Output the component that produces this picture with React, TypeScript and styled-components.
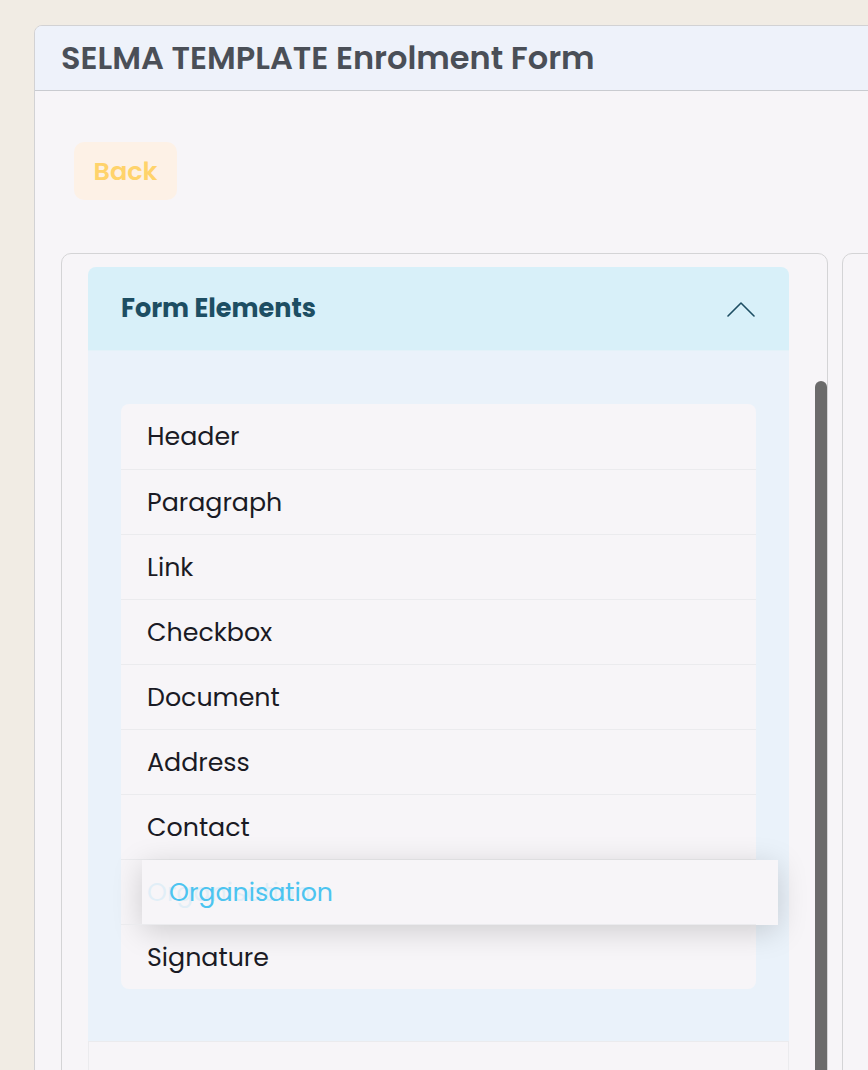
import React from 'react'
import styled, { createGlobalStyle } from 'styled-components'

const GlobalStyle = createGlobalStyle`
  html, body {
    margin: 0;
    padding: 0;
    background: #f1ece4;
    overflow: hidden;
  }
  body {
    font-family: Poppins, Inter, 'Noto Sans', sans-serif;
  }
`

const items = [
  'Header',
  'Paragraph',
  'Link',
  'Checkbox',
  'Document',
  'Address',
  'Contact',
  'Organisation',
  'Signature',
]

const dragging = 'Organisation'

const ChevronUp = () => (
  <svg width="28" height="16" viewBox="0 0 28 16" fill="none">
    <path
      d="M1 15 L14 2 L27 15"
      stroke="#1d4e63"
      strokeWidth="1.6"
      strokeLinecap="round"
      strokeLinejoin="round"
    />
  </svg>
)

const App: React.FC = () => {
  return (
    <Page>
      <GlobalStyle />
      <Card>
        <CardHeader>
          <Title>SELMA TEMPLATE Enrolment Form</Title>
        </CardHeader>
        <CardBody>
          <BackButton>Back</BackButton>
          <Panels>
            <Panel>
              <Accordion>
                <AccordionHeader>
                  <AccordionTitle>Form Elements</AccordionTitle>
                  <ChevronUp />
                </AccordionHeader>
                <AccordionBody>
                  <ElementList>
                    {items.map((item) =>
                      item === dragging ? (
                        <Row key={item}>
                          <DragItem>{item}</DragItem>
                          <Ghost>{item}</Ghost>
                        </Row>
                      ) : (
                        <Row key={item}>{item}</Row>
                      )
                    )}
                  </ElementList>
                </AccordionBody>
                <NextSection />
              </Accordion>
              <Scrollbar />
            </Panel>
            <Panel />
          </Panels>
        </CardBody>
      </Card>
    </Page>
  )
}

export default App

const Page = styled.div`
  height: 1070px;
  padding: 25px 0 0 34px;
  box-sizing: border-box;
  overflow: hidden;
`

const Card = styled.div`
  width: 900px;
  height: 1100px;
  background: #f7f5f8;
  border: 1px solid #d2d2d4;
  border-radius: 8px 0 0 0;
  overflow: hidden;
`

const CardHeader = styled.div`
  height: 64px;
  background: #eef2fa;
  border-bottom: 1px solid #c9cbd0;
  display: flex;
  align-items: center;
  padding-left: 26px;
`

const Title = styled.h1`
  margin: 0;
  font-size: 32px;
  font-weight: 600;
  color: #4a4f57;
`

const CardBody = styled.div`
  padding: 51px 0 0 26px;
`

const BackButton = styled.button`
  display: block;
  margin-left: 13px;
  width: 103px;
  height: 58px;
  border: none;
  border-radius: 10px;
  background: #fdf1e6;
  color: #ffd36b;
  font-family: inherit;
  font-size: 25.5px;
  font-weight: 600;
  padding: 0;
`

const Panels = styled.div`
  display: flex;
  gap: 14px;
  margin-top: 53px;
`

const Panel = styled.div`
  position: relative;
  width: 767px;
  flex-shrink: 0;
  height: 900px;
  box-sizing: border-box;
  border: 1px solid #d4d4d6;
  border-radius: 10px;
  padding: 13px 37px 0 26px;
`

const Scrollbar = styled.div`
  position: absolute;
  right: 0;
  top: 127px;
  width: 12px;
  height: 800px;
  background: #6b6b6b;
  border-radius: 6px 6px 0 0;
`

const Accordion = styled.div`
  width: 701px;
`

const AccordionHeader = styled.div`
  height: 83px;
  background: #d8f0f9;
  border-radius: 8px 8px 0 0;
  border-bottom: 1px solid #e3f2f8;
  display: flex;
  align-items: center;
  justify-content: space-between;
  padding: 0 34px 0 33px;
`

const AccordionTitle = styled.div`
  font-size: 25.5px;
  font-weight: 700;
  color: #1d4e63;
`

const AccordionBody = styled.div`
  background: #eaf2fa;
  padding: 53px 33px 52px;
`

const NextSection = styled.div`
  height: 60px;
  background: #f7f5f8;
  border: 1px solid #ebebee;
  border-bottom: none;
`

const ElementList = styled.div`
  background: #f7f5f8;
  border-radius: 8px;
`

const Row = styled.div`
  position: relative;
  height: 65px;
  box-sizing: border-box;
  display: flex;
  align-items: center;
  padding-left: 26px;
  font-size: 25.3px;
  color: #1a1a24;

  & + & {
    border-top: 1px solid #ebebee;
  }
`

const Ghost = styled.span`
  position: relative;
  color: #4cc4f0;
  opacity: 0.12;
`

const DragItem = styled.div`
  position: absolute;
  left: 21px;
  top: 0;
  width: 636px;
  height: 65px;
  box-sizing: border-box;
  display: flex;
  align-items: center;
  padding-left: 27px;
  background: #f7f5f8;
  color: #4cc4f0;
  font-size: 25.3px;
  box-shadow: 0 6px 30px rgba(0, 0, 0, 0.17);
`
